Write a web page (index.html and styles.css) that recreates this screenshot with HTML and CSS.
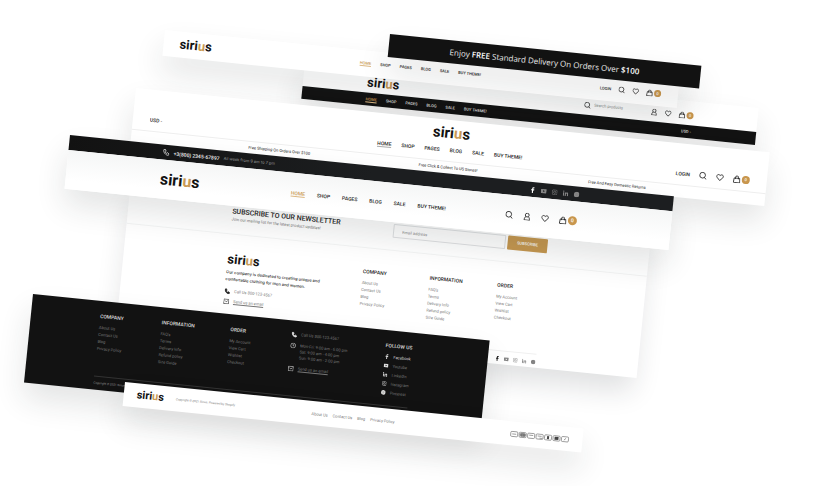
FILE: index.html
```html
<!DOCTYPE html>
<html lang="en">
<head>
<meta charset="utf-8">
<title>Sirius header and footer layouts</title>
<link rel="stylesheet" href="styles.css">
</head>
<body>
<svg class="sprite" aria-hidden="true">
  <symbol id="search" viewBox="0 0 16 16"><circle cx="7" cy="7" r="5.7"/><path d="M11.2 11.2 15 15"/></symbol>
  <symbol id="user" viewBox="0 0 16 16"><circle cx="8" cy="5" r="3.8"/><path d="M5.6 8.2C3.4 9.4 2.8 12 2.6 15h10.8c-.2-3-.8-5.600-3-6.800"/></symbol>
  <symbol id="heart" viewBox="0 0 16 16"><path d="M8 14.200 2.300 8.300C-.5 5 3.800-.2 8 4.100c4.200-4.300 8.500.9 5.700 4.200z"/></symbol>
  <symbol id="bag" viewBox="0 0 16 16"><path d="M2.500 6h11l1 9h-13zM5 8V4.500a3 3 0 0 1 6 0V8"/></symbol>
  <symbol id="phone" viewBox="0 0 16 16"><path d="M2 2.500 5 1l2.500 4.500L5.700 7.200c.7 1.500 1.700 2.400 3.200 3.200l1.700-1.900L15 11l-1.500 3.300C8 15.500.8 8.500 2 2.500z"/></symbol>
  <symbol id="mail" viewBox="0 0 16 16"><path d="M1.500 2.500h13v12h-13zM4 6l4 3.500L12 6"/></symbol>
  <symbol id="clock" viewBox="0 0 16 16"><circle cx="8" cy="8" r="6.500"/><path d="M8 4v4.500h3"/></symbol>
  <symbol id="fb" viewBox="0 0 16 16"><path class="fill" d="M6 16V9H3.500V6H6V4c0-2.800 1.500-4 4-4h2v3h-1.500C9.400 3 9 3.500 9 4.500V6h3l-.5 3H9v7z"/></symbol>
  <symbol id="yt" viewBox="0 0 16 16"><path class="fill" fill-rule="evenodd" d="M2 2.500h12q2 0 2 2v7q0 2-2 2H2q-2 0-2-2v-7q0-2 2-2zM6.500 5.300v5.400L11 8z"/></symbol>
  <symbol id="ig" viewBox="0 0 16 16"><rect x="1.500" y="1.500" width="13" height="13" rx="3.500"/><circle cx="8" cy="8" r="3"/></symbol>
  <symbol id="li" viewBox="0 0 16 16"><path class="fill" d="M1 5.500h3V15H1zM1 1h3v3H1zM6 5.500h3V7c1.500-2.500 6-2 6 2v6h-3V9.800c0-2.400-3-2.300-3 0V15H6z"/></symbol>
  <symbol id="pin" viewBox="0 0 16 16"><circle class="fill" cx="8" cy="8" r="7.500"/><path class="knock" d="M6.500 13 8 6.500M6 9C4 5 8 3 10 5s0 6-2.500 4.500"/></symbol>
</svg>

<main class="canvas">

  <section class="panel panel-search">
    <div class="row inset-64">
      <a class="logo logo-s" href="#">siri<span>u</span>s</a>
      <div class="tools tools-s">
        <label class="search"><svg class="icon"><use href="#search"/></svg><input type="search" placeholder="Search products" aria-label="Search products"></label>
        <a href="#" aria-label="Account"><svg class="icon"><use href="#user"/></svg></a>
        <a href="#" aria-label="Wishlist"><svg class="icon"><use href="#heart"/></svg></a>
        <a class="cart" href="#" aria-label="Cart"><svg class="icon"><use href="#bag"/></svg><b>0</b></a>
      </div>
    </div>
    <div class="bar inset-64">
      <nav class="nav nav-s gold"><a href="#">HOME</a><a href="#">SHOP</a><a href="#">PAGES</a><a href="#">BLOG</a><a href="#">SALE</a><a href="#">BUY THEME!</a></nav>
      <select class="currency" aria-label="Currency"><option>USD -</option></select>
    </div>
  </section>

  <header class="panel panel-compact">
    <a class="logo logo-s" href="#">siri<span>u</span>s</a>
    <nav class="nav nav-s gold"><a href="#">HOME</a><a href="#">SHOP</a><a href="#">PAGES</a><a href="#">BLOG</a><a href="#">SALE</a><a href="#">BUY THEME!</a></nav>
    <div class="tools tools-s">
      <a class="login" href="#">LOGIN</a>
      <a href="#" aria-label="Search"><svg class="icon"><use href="#search"/></svg></a>
      <a href="#" aria-label="Wishlist"><svg class="icon"><use href="#heart"/></svg></a>
      <a class="cart" href="#" aria-label="Cart"><svg class="icon"><use href="#bag"/></svg><b>0</b></a>
    </div>
  </header>

  <p class="panel panel-promo">Enjoy <b>FREE</b> Standard Delivery On Orders Over <b>$100</b></p>

  <header class="panel panel-center">
    <div class="center-main">
      <select class="currency" aria-label="Currency"><option>USD -</option></select>
      <div class="center-brand">
        <a class="logo logo-m" href="#">siri<span>u</span>s</a>
        <nav class="nav nav-m"><a href="#">HOME</a><a href="#">SHOP</a><a href="#">PAGES</a><a href="#">BLOG</a><a href="#">SALE</a><a href="#">BUY THEME!</a></nav>
      </div>
      <div class="tools tools-m">
        <a class="login" href="#">LOGIN</a>
        <a href="#" aria-label="Search"><svg class="icon"><use href="#search"/></svg></a>
        <a href="#" aria-label="Wishlist"><svg class="icon"><use href="#heart"/></svg></a>
        <a class="cart" href="#" aria-label="Cart"><svg class="icon"><use href="#bag"/></svg><b>0</b></a>
      </div>
    </div>
    <div class="perks"><span>Free Shipping On Orders Over $100</span><span>Free Click &amp; Collect To US Stores!</span><span>Free And Easy Domestic Returns</span></div>
  </header>

  <footer class="panel panel-light">
    <form class="newsletter">
      <div>
        <h2>SUBSCRIBE TO OUR NEWSLETTER</h2>
        <p>Join our mailing list for the latest product updates!</p>
      </div>
      <div class="signup"><input type="email" placeholder="Email address" aria-label="Email address"><button type="button">SUBSCRIBE</button></div>
    </form>
    <div class="light-body">
      <div class="about">
        <a class="logo logo-s" href="#">siri<span>u</span>s</a>
        <p>Our company is dedicated to creating unique and comfortable clothing for men and women.</p>
        <a class="contact" href="#"><svg class="icon solid"><use href="#phone"/></svg>Call Us 800-123-4567</a>
        <a class="contact" href="#"><svg class="icon"><use href="#mail"/></svg><u>Send us an email</u></a>
      </div>
      <div class="links"><h3>COMPANY</h3><a href="#">About Us</a><a href="#">Contact Us</a><a href="#">Blog</a><a href="#">Privacy Policy</a></div>
      <div class="links"><h3>INFORMATION</h3><a href="#">FAQ's</a><a href="#">Terms</a><a href="#">Delivery Info</a><a href="#">Refund policy</a><a href="#">Size Guide</a></div>
      <div class="links"><h3>ORDER</h3><a href="#">My Account</a><a href="#">View Cart</a><a href="#">Wishlist</a><a href="#">Checkout</a></div>
    </div>
    <div class="light-end">
      <div class="social"><a href="#" aria-label="Facebook"><svg class="icon"><use href="#fb"/></svg></a><a href="#" aria-label="Youtube"><svg class="icon"><use href="#yt"/></svg></a><a href="#" aria-label="Instagram"><svg class="icon"><use href="#ig"/></svg></a><a href="#" aria-label="LinkedIn"><svg class="icon"><use href="#li"/></svg></a><a href="#" aria-label="Pinterest"><svg class="icon"><use href="#pin"/></svg></a></div>
    </div>
  </footer>

  <header class="panel panel-main">
    <div class="bar topbar">
      <div class="call"><svg class="icon"><use href="#phone"/></svg><b>+3(800) 2345-67897</b><span>All week from 9 am to 7 pm</span></div>
      <div class="social"><a href="#" aria-label="Facebook"><svg class="icon"><use href="#fb"/></svg></a><a href="#" aria-label="Youtube"><svg class="icon"><use href="#yt"/></svg></a><a href="#" aria-label="Instagram"><svg class="icon"><use href="#ig"/></svg></a><a href="#" aria-label="LinkedIn"><svg class="icon"><use href="#li"/></svg></a><a href="#" aria-label="Pinterest"><svg class="icon"><use href="#pin"/></svg></a></div>
    </div>
    <div class="main-row">
      <a class="logo logo-l" href="#">siri<span>u</span>s</a>
      <nav class="nav nav-l gold"><a href="#">HOME</a><a href="#">SHOP</a><a href="#">PAGES</a><a href="#">BLOG</a><a href="#">SALE</a><a href="#">BUY THEME!</a></nav>
      <div class="tools tools-l">
        <a href="#" aria-label="Search"><svg class="icon"><use href="#search"/></svg></a>
        <a href="#" aria-label="Account"><svg class="icon"><use href="#user"/></svg></a>
        <a href="#" aria-label="Wishlist"><svg class="icon"><use href="#heart"/></svg></a>
        <a class="cart" href="#" aria-label="Cart"><svg class="icon"><use href="#bag"/></svg><b>0</b></a>
      </div>
    </div>
  </header>

  <footer class="panel panel-dark">
    <div class="dark-body">
      <div class="links"><h3>COMPANY</h3><a href="#">About Us</a><a href="#">Contact Us</a><a href="#">Blog</a><a href="#">Privacy Policy</a></div>
      <div class="links"><h3>INFORMATION</h3><a href="#">FAQ's</a><a href="#">Terms</a><a href="#">Delivery Info</a><a href="#">Refund policy</a><a href="#">Size Guide</a></div>
      <div class="links"><h3>ORDER</h3><a href="#">My Account</a><a href="#">View Cart</a><a href="#">Wishlist</a><a href="#">Checkout</a></div>
      <div class="reach">
        <a class="contact" href="#"><svg class="icon solid"><use href="#phone"/></svg>Call Us 800-123-4567</a>
        <p class="contact"><svg class="icon"><use href="#clock"/></svg><span>Mon-Fri: 9:00 am - 6:00 pm<br>Sat: 9:00 am - 4:00 pm<br>Sun: 9:00 am - 2:00 pm</span></p>
        <a class="contact" href="#"><svg class="icon"><use href="#mail"/></svg><u>Send us an email</u></a>
      </div>
      <div class="links follow"><h3>FOLLOW US</h3><a href="#"><svg class="icon"><use href="#fb"/></svg>Facebook</a><a href="#"><svg class="icon"><use href="#yt"/></svg>Youtube</a><a href="#"><svg class="icon"><use href="#li"/></svg>LinkedIn</a><a href="#"><svg class="icon"><use href="#ig"/></svg>Instagram</a><a href="#"><svg class="icon"><use href="#pin"/></svg>Pinterest</a></div>
    </div>
    <p class="copyright">Copyright © 2021 Sirius. Powered by Shopify</p>
  </footer>

  <footer class="panel panel-slim">
    <div class="slim-brand"><a class="logo logo-xs" href="#">siri<span>u</span>s</a><p>Copyright © 2021 Sirius. Powered by Shopify</p></div>
    <nav class="slim-links"><a href="#">About Us</a><a href="#">Contact Us</a><a href="#">Blog</a><a href="#">Privacy Policy</a></nav>
    <svg class="cards" viewBox="0 0 60 7" role="img" aria-label="Payment methods">
      <g class="card"><rect x="1" y="1" width="7" height="5" rx="1"/><rect x="9.500" y="1" width="7" height="5" rx="1"/><rect x="18" y="1" width="7" height="5" rx="1"/><rect x="26.500" y="1" width="7" height="5" rx="1"/><rect x="35" y="1" width="7" height="5" rx="1"/><rect x="43.500" y="1" width="7" height="5" rx="1"/><rect x="52" y="1" width="7" height="5" rx="1"/></g>
      <path d="M2.500 3.500h4M19.500 3h4M28 3h4M30 5h3M54.500 4.500l2-2"/><path class="strong" d="M37.500 3.500h2"/>
      <circle cx="12" cy="3.500" r="1.600"/><circle cx="14.200" cy="3.500" r="1.600"/><path class="strong" d="M45 3.500h4"/>
    </svg>
  </footer>

</main>
</body>
</html>
```
FILE: styles.css
```css
* { box-sizing: border-box; }
body { margin: 0; background: #fff; color: #1c1c1c; font-family: Roboto, "Liberation Sans", sans-serif; }
h2, h3, p { margin: 0; }
a { color: inherit; text-decoration: none; }
b, h3 { font-weight: 500; }
.sprite { position: absolute; width: 0; height: 0; }

/* Free canvas: the panels are tilted sheets laid over each other */
.canvas { position: relative; min-height: 100vh; overflow: hidden; }
.panel {
  position: absolute;
  transform: rotate(5.8deg);
  transform-origin: 0 0;
  background: #fff;
  box-shadow: 0 16px 30px rgba(30, 38, 45, .12);
}
.panel-search { left: 305px; top: 62px; width: 456px; }
.panel-compact { left: 165px; top: 30px; width: 517px; }
.panel-promo { left: 390px; top: 34px; width: 313px; }
.panel-center { left: 136px; top: 88px; width: 637px; }
.panel-light { left: 131px; top: 180px; width: 523px; box-shadow: 0 18px 28px -4px rgba(30, 38, 45, .14); }
.panel-main { left: 70px; top: 135px; width: 607px; }
.panel-dark { left: 33px; top: 294px; width: 459px; }
.panel-slim { left: 125px; top: 382px; width: 461px; }

/* Shared parts */
.icon { display: block; flex: none; width: 7px; height: 7px; fill: none; stroke: currentColor; stroke-width: 1.600; }
.icon.solid { fill: currentColor; }
.fill { fill: currentColor; stroke: none; }
.knock { stroke: #888; stroke-width: 1; }
.logo { font: 700 13px/16px Roboto, "Liberation Sans", sans-serif; color: #121212; }
.logo span { color: #c99a55; }
.logo-xs { font-size: 11px; }
.logo-m { font-size: 15px; }
.logo-l { font-size: 16px; }
.nav { display: flex; font-weight: 500; }
.nav a:first-child { text-decoration: underline; text-underline-offset: 1px; text-decoration-thickness: 1px; text-decoration-color: #aaa; }
.nav.gold a:first-child { color: #c99a55; text-decoration-color: #dcb884; }
.nav-s { gap: 9px; font-size: 4px; line-height: 8px; }
.nav-m { gap: 10px; font-size: 5px; line-height: 8px; }
.nav-l { gap: 12px; font-size: 5px; line-height: 8px; }
.tools { display: flex; align-items: center; justify-content: flex-end; gap: 7px; }
.tools-l { gap: 10px; }
.tools-m { gap: 9px; }
.tools-m .icon, .tools-l .icon { width: 8px; height: 8px; }
.login { font-size: 4px; font-weight: 500; }
.tools-m .login { font-size: 5px; }
.cart { display: flex; align-items: center; gap: 1px; }
.cart b { width: 7px; border-radius: 50%; background: #c8964d; color: #fff; font-size: 4px; line-height: 7px; text-align: center; }
.tools-m b { width: 8px; line-height: 8px; }
.tools-l b { width: 9px; font-size: 5px; line-height: 9px; }
.currency { appearance: none; border: 0; padding: 0; background: none; color: inherit; font: 500 4px/8px Roboto, sans-serif; }
.center-main .currency { font-size: 5px; }
.bar { display: flex; align-items: center; justify-content: space-between; background: #121212; color: #ddd; }
.social { display: flex; align-items: center; gap: 5px; color: #858585; }
.social .icon { width: 6px; height: 6px; }

/* Promo strip */
.panel-promo { background: #121212; color: #e8e8e8; font-family: "Open Sans", sans-serif; font-size: 8px; line-height: 23px; text-align: center; }
.panel-promo b { font-weight: 600; color: #fff; }

/* Compact header */
.panel-compact { display: grid; grid-template-columns: 1fr auto 1fr; align-items: center; padding: 5px 17px 5px 16px; }

/* Header with search */
.inset-64 { padding: 0 64px; }
.row { display: flex; align-items: center; justify-content: space-between; padding-top: 6px; padding-bottom: 2px; }
.panel-search .bar { height: 13px; }
.search { display: flex; align-items: center; gap: 3px; }
.search input { width: 50px; border: 0; padding: 0; background: none; font: 4px/8px Roboto, sans-serif; outline: 0; }
input::placeholder { color: #8a8a8a; }

/* Centred header */
.center-main { display: grid; grid-template-columns: 1fr auto 1fr; align-items: end; padding: 5px 17px 7px; border-bottom: 1px solid #eee; }
.center-brand { display: grid; justify-items: center; gap: 5px; }
.currency { justify-self: start; }
.perks { display: grid; grid-template-columns: repeat(3, 1fr); padding: 0 64px; font-size: 4px; line-height: 12px; text-align: center; }

/* Main header */
.topbar { height: 15px; padding: 0 94px; background: linear-gradient(90deg, #121212, #1c1e20 50%); }
.call { display: flex; align-items: center; gap: 4px; font-size: 5px; color: #f4f4f4; }
.call span { font: 4px/8px Inter, sans-serif; color: #999; }
.topbar .social a:first-child { color: #fff; }
.main-row { display: grid; grid-template-columns: 1fr auto 1fr; align-items: center; height: 39px; padding: 0 94px; background: linear-gradient(#f5f6f6, #fff 30px); }

/* Light footer */
.newsletter { display: flex; justify-content: space-between; align-items: start; padding: 17px 102px 11px 104px; border-bottom: 1px solid #f4f4f4; }
.newsletter h2 { font-size: 7px; line-height: 8px; font-weight: 500; }
.newsletter p { font-size: 4px; line-height: 7px; color: #777; }
.signup { display: flex; gap: 2px; }
.signup input { width: 113px; height: 14px; padding: 0 8px; border: 1px solid #dfe1e3; border-radius: 1px; background: none; font: 4px/8px Roboto, sans-serif; }
.signup button { width: 40px; height: 14px; padding: 0; border: 0; border-radius: 1px; background: #c69850; color: #fff; font: 500 4px/14px Roboto, sans-serif; }
.light-body { display: grid; grid-template-columns: 136px 67px 68px 1fr; padding: 14px 102px 0 104px; height: 88px; }
.about p { padding: 1px 26px 6px 0; font: 500 4px/7px Inter, sans-serif; }
.contact { display: flex; gap: 4px; height: 10px; font-size: 4px; line-height: 6px; color: #777; }
.contact .icon { width: 6px; height: 6px; color: #222; }
.links h3 { margin-bottom: 4px; font-size: 5px; line-height: 8px; white-space: nowrap; }
.links a { display: block; font-size: 4px; line-height: 7px; color: #777; }
.light-body .links { padding-top: 5px; }
.light-end { display: flex; justify-content: flex-end; margin: 0 102px 0 104px; padding: 5px 0 3px; border-top: 1px solid #f0f0f0; }
.light-end .social { gap: 4px; }
.light-end .icon { width: 5px; height: 5px; }
.light-end a:first-child { color: #111; }

/* Dark footer */
.panel-dark { padding: 11px 75px 0 69px; height: 89px; background: #121212; color: #ddd; }
.dark-body { display: grid; grid-template-columns: 62px 69px 61px 95px 1fr; height: 65px; border-bottom: 1px solid #333; }
.panel-dark .contact { height: auto; margin-bottom: 5px; }
.panel-dark .contact .icon { color: #ddd; }
.panel-dark .follow a { display: flex; align-items: center; gap: 4px; margin-bottom: 2px; }
.follow .icon { width: 5px; height: 5px; color: #ddd; }
.panel-dark .follow a:nth-of-type(1) { color: #ddd; }
.copyright { font-size: 3px; line-height: 13px; color: #999; }

/* Slim footer */
.panel-slim { display: grid; grid-template-columns: 1fr auto 1fr; align-items: center; padding: 4px 13px; color: #777; font-size: 4px; }
.slim-brand { display: flex; align-items: center; gap: 12px; }
.slim-brand p { font-size: 3px; }
.slim-links { display: flex; gap: 5px; }
.cards { width: 60px; height: 7px; justify-self: end; fill: #777; stroke: #888; stroke-width: .8; }
.card { fill: #fff; }
.strong { stroke: #444; stroke-width: 3; }
```
